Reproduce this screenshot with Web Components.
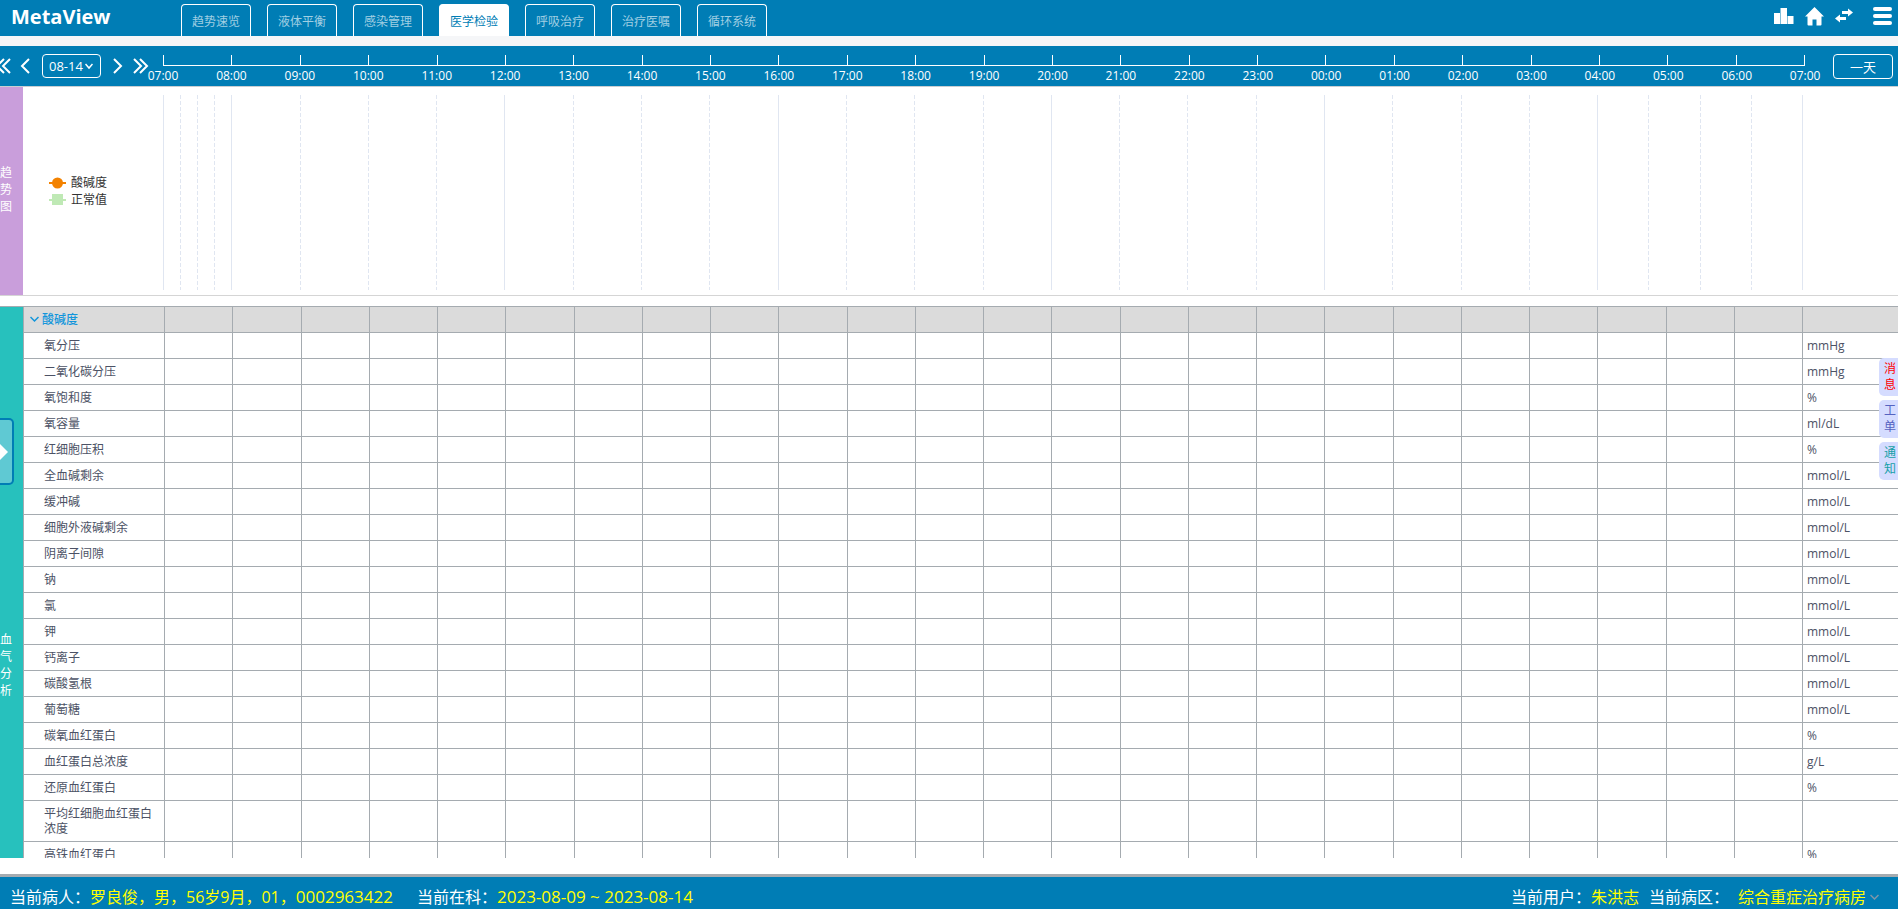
<!DOCTYPE html>
<html lang="zh-CN">
<head>
<meta charset="utf-8">
<title>MetaView</title>
<style>
  html, body { height: 100%; margin: 0; }
  body {
    --brand: #007db5;
    --axis-left: 163px;
    --rail: 23px;
    font: 12px/15px "Open Sans", "Noto Sans CJK SC", sans-serif;
    color: #4c5265;
    background: #fff;
    overflow: hidden;
  }
</style>
</head>
<body>
<mv-app></mv-app>
<script>
const base = `*{box-sizing:border-box} button,select{font:inherit;color:inherit;background:none;border:0;margin:0;padding:0;cursor:pointer} select{appearance:none} svg{display:block} h1,p,ul{margin:0;padding:0}`;

function define(name, css, render) {
  customElements.define(name, class extends HTMLElement {
    connectedCallback() {
      if (this.shadowRoot) return;
      const root = this.attachShadow({ mode: 'open' });
      const t = document.createElement('template');
      t.innerHTML = `<style>${base}${css}</style>${render(this)}`;
      root.append(t.content.cloneNode(true));
    }
  });
}

const paths = {
  left: 'M13 4 6 11l7 7',
  right: 'M5 4l7 7-7 7',
  dleft: 'M8 4 1 11l7 7M14 4 7 11l7 7',
  dright: 'M1 4l7 7-7 7M7 4l7 7-7 7'
};

define('mv-tab', `
  :host{display:block}
  a{display:block;width:70px;height:32px;padding-top:9px;border:1px solid #fff;border-bottom:0;border-radius:4px 4px 0 0;
    color:#a0cfe3;text-align:center;text-decoration:none;line-height:16px}
  :host([active]) a{background:#fff;color:var(--brand)}
`, () => `<a href="#"><slot></slot></a>`);

define('mv-header', `
  :host{display:flex;height:36px;background:var(--brand);color:#fff}
  h1{width:181px;padding-left:11px;font-size:20px;line-height:34px;font-weight:700}
  nav{display:flex;gap:16px;align-items:flex-end}
  .tools{margin-left:auto;display:flex;gap:11px;padding:6px 6px 0 0}
  .tools button{height:20px}
  .tools button:last-child{margin-left:9px}
`, () => `
  <h1>MetaView</h1>
  <nav>${['趋势速览', '液体平衡', '感染管理', '医学检验', '呼吸治疗', '治疗医嘱', '循环系统']
    .map((t, i) => `<mv-tab ${i === 3 ? 'active' : ''}>${t}</mv-tab>`).join('')}</nav>
  <div class="tools">
    <button aria-label="统计"><svg width="20" height="20" fill="#fff"><path d="M0 7h6v11H0zM6.500 2h6.500v16H6.500zM13.500 10H19.500v8H13.500z"/></svg></button>
    <button aria-label="主页"><svg width="19" height="20" fill="#fff"><path d="M9.500 1 0 10.500h2.500V18.500q0 1 1 1H7.500v-6h4v6h4q1 0 1-1V10.500H19z"/></svg></button>
    <button aria-label="切换"><svg width="18" height="20" fill="#fff"><path d="M7 5h6V2.500l5 4-5 4V8H7zM11 11H5V8.500l-5 4 5 4V14h6z"/></svg></button>
    <button aria-label="菜单"><svg width="19" height="20" fill="#fff"><rect y="1" width="19" height="4" rx="2"/><rect y="8" width="19" height="4" rx="2"/><rect y="15" width="19" height="4" rx="2"/></svg></button>
  </div>`);

const hours = Array.from({ length: 25 }, (_, i) => String((i + 7) % 24).padStart(2, '0') + ':00');

define('mv-timebar', `
  :host{display:flex;height:41px;background:var(--brand);color:#fff;border-bottom:1px solid #c9ced2}
  .nav{width:var(--axis-left);display:flex;align-items:center;flex:none}
  .nav svg{width:18px;height:22px;fill:none;stroke:#fff;stroke-width:2}
  .nav button{width:18px;height:22px;flex:none}
  .nav button:first-child{margin-left:-4px}
  .nav button:nth-child(2){margin-left:2px}
  .date{position:relative;width:59px;height:24px;margin:0 8px;flex:none}
  .date select{width:59px;height:24px;border:1px solid #fff;border-radius:4px;padding-left:6px;font-size:13px;line-height:22px}
  .date svg{position:absolute;right:8px;top:8px;width:8px;height:8px;pointer-events:none}
  .nav button:last-child{margin-left:6px}
  .axis{flex:1;padding-top:9px;min-width:0}
  .ticks{display:flex;height:11px;justify-content:space-between;border-bottom:1px solid #fff}
  .ticks i{width:1px;background:#fff}
  .labels{display:flex;margin:0 calc(-100% / 48);line-height:20px}
  .labels span{flex:1 0 0;text-align:center;white-space:nowrap}
  .range{width:93px;flex:none;padding:8px 5px 0 0;display:flex;justify-content:flex-end}
  .range button{width:60px;height:25px;border:1px solid #fff;border-radius:4px;font-size:13px;line-height:22px}
`, () => `
  <div class="nav">
    <button aria-label="前一段"><svg><path d="${paths.dleft}"/></svg></button>
    <button aria-label="前一天"><svg><path d="${paths.left}"/></svg></button>
    <div class="date"><select aria-label="日期"><option>08-14</option></select><svg viewBox="0 0 8 8"><path d="M.5 2 4 6 7.500 2" stroke-width="1.500"/></svg></div>
    <button aria-label="后一天"><svg><path d="${paths.right}"/></svg></button>
    <button aria-label="后一段"><svg><path d="${paths.dright}"/></svg></button>
  </div>
  <div class="axis"><div class="ticks">${'<i></i>'.repeat(25)}</div>
  <div class="labels">${hours.map(h => `<span>${h}</span>`).join('')}</div></div>
  <div class="range"><button>一天</button></div>`);

define('mv-rail', `
  :host{display:flex;flex-direction:column;justify-content:center;width:var(--rail);flex:none;color:#fff}
  span{width:12px;line-height:17px;font-size:12px;word-break:break-all}
`, () => `<span><slot></slot></span>`);

const solid = [0, 1, 5, 9, 13, 17, 21, 24];
const minor = [0.25, 0.5, 0.75, 21.75, 22.5, 23.25];
const skipped = [22, 23];
const gridLine = h => `<line x1="${h / 24 * 100}%" x2="${h / 24 * 100}%" y1="0" y2="100%" ${solid.includes(h) ? '' : 'stroke-dasharray="4 2"'}/>`;

define('mv-trend', `
  :host{display:flex;height:209px;border-bottom:1px solid #d5d5d5;color:#333}
  mv-rail{background:#c99edb;padding-bottom:4px}
  ul{list-style:none;width:140px;flex:none;align-self:center;padding-left:26px}
  li{display:flex;align-items:center;gap:5px;line-height:17px}
  .plot{flex:1;margin:8px 96px 5px 0;min-width:0}
  .plot svg{width:100%;height:100%;overflow:visible}
  .plot line{stroke:#e0e6f1;stroke-width:1;shape-rendering:crispEdges}
`, () => `
  <mv-rail>趋势图</mv-rail>
  <ul>
    <li><svg width="17" height="12"><path d="M0 6h17" stroke="#f38200" stroke-width="2"/><circle cx="8.500" cy="6" r="5.500" fill="#f38200"/></svg>酸碱度</li>
    <li><svg width="17" height="12"><path d="M0 6h17" stroke="#bfe9b5" stroke-width="2"/><rect x="3" y="0" width="11" height="11" fill="#bfe9b5"/></svg>正常值</li>
  </ul>
  <div class="plot"><svg aria-hidden="true"><g transform="translate(.5 0)">${[...hours.keys(), ...minor].filter(h => !skipped.includes(h)).map(gridLine).join('')}</g></svg></div>`);

const rows = [
  ['氧分压', 'mmHg'], ['二氧化碳分压', 'mmHg'], ['氧饱和度', '%'], ['氧容量', 'ml/dL'], ['红细胞压积', '%'],
  ['全血碱剩余', 'mmol/L'], ['缓冲碱', 'mmol/L'], ['细胞外液碱剩余', 'mmol/L'], ['阴离子间隙', 'mmol/L'], ['钠', 'mmol/L'],
  ['氯', 'mmol/L'], ['钾', 'mmol/L'], ['钙离子', 'mmol/L'], ['碳酸氢根', 'mmol/L'], ['葡萄糖', 'mmol/L'],
  ['碳氧血红蛋白', '%'], ['血红蛋白总浓度', 'g/L'], ['还原血红蛋白', '%'], ['平均红细胞血红蛋白浓度', ''], ['高铁血红蛋白', '%']
];

define('mv-lab-table', `
  :host{display:flex;align-items:flex-start;overflow:hidden}
  mv-rail{background:#27c1bd;border-top:1px solid #a5abb0;min-height:716px}
  table{flex:1;width:0;table-layout:fixed;border-collapse:separate;border-spacing:0}
  .name{width:141px} .unit{width:96px}
  th,td{border-top:1px solid #a5abb0;border-left:1px solid #a5abb0;padding:5px 4px;text-align:left;font-weight:400;height:26px;vertical-align:top}
  tbody th{padding-left:20px}
  thead th,thead td{background:#dbdbdb}
  thead button{display:flex;align-items:center;gap:3px;margin-left:2px;color:#1296db;font-weight:500;line-height:15px}
`, () => `
  <mv-rail>血气分析</mv-rail>
  <table>
    <colgroup><col class="name">${'<col>'.repeat(24)}<col class="unit"></colgroup>
    <thead><tr><th scope="col"><button><svg width="9" height="7" fill="none" stroke="#1296db" stroke-width="1.500"><path d="M.5 1 4.500 5 8.500 1"/></svg>酸碱度</button></th>${'<td></td>'.repeat(25)}</tr></thead>
    <tbody>${rows.map(([n, u]) => `<tr><th scope="row">${n}</th>${'<td></td>'.repeat(24)}<td>${u}</td></tr>`).join('')}</tbody>
  </table>`);

define('mv-quick-links', `
  :host{display:flex;flex-direction:column;gap:4px;position:absolute;right:0;top:358px;z-index:2}
  button{width:19px;height:38px;padding:3px 2px 3px 5px;border-radius:5px 0 0 5px;background:#d5dcff;line-height:16px;word-break:break-all;text-align:left}
  .msg{color:#f00} .order{color:#5563c1} .notice{color:#17a0a8}
`, () => `<button class="msg">消息</button><button class="order">工单</button><button class="notice">通知</button>`);

define('mv-drawer-handle', `
  :host{display:block;position:absolute;left:0;top:418px;z-index:2}
  button{display:flex;align-items:center;width:14px;height:67px;border:2px solid var(--brand);border-left:0;border-radius:0 5px 5px 0;background:#5fc9d3}
`, () => `<button aria-label="展开"><svg width="8" height="16" fill="#fff"><path d="M0 0 8 8 0 16z"/></svg></button>`);

define('mv-status', `
  :host{display:flex;height:35px;border-top:3px solid #a5abb0;background:var(--brand);color:#fff;padding:8px 19px 0 10px;font-size:16px;line-height:24px;white-space:nowrap}
  b{font-weight:400;color:#ff0}
  .stay{margin-left:24px}
  .num{font-size:17px}
  .user{margin-left:auto}
  .ward{display:flex;margin-left:10px}
  label{margin-right:9px}
  select{width:132px;height:24px;color:#ff0;line-height:24px}
  .ward svg{margin-top:8px}
`, () => `
  <p>当前病人：<b>罗良俊，男，56岁9月，01，<span class="num">0002963422</span></b></p>
  <p class="stay">当前在科：<b class="num">2023-08-09 ~ 2023-08-14</b></p>
  <p class="user">当前用户：<b>朱洪志</b></p>
  <div class="ward"><label for="ward">当前病区：</label><select id="ward"><option>综合重症治疗病房</option></select>
  <svg width="9" height="8" fill="none" stroke="#7f96a8" stroke-width="1.500"><path d="M.5 2 4.500 6 8.500 2"/></svg></div>`);

define('mv-app', `
  :host{display:flex;flex-direction:column;height:100%;position:relative}
  mv-header,mv-timebar,mv-trend,mv-status{flex:none}
  mv-timebar{margin-top:10px;box-shadow:0 -10px 0 #f5f6f8}
  mv-lab-table{flex:1;min-height:0;margin:10px 0 16px}
`, () => `
  <mv-header></mv-header><mv-timebar></mv-timebar><mv-trend></mv-trend><mv-lab-table></mv-lab-table><mv-status></mv-status>
  <mv-drawer-handle></mv-drawer-handle><mv-quick-links></mv-quick-links>`);
</script>
</body>
</html>
